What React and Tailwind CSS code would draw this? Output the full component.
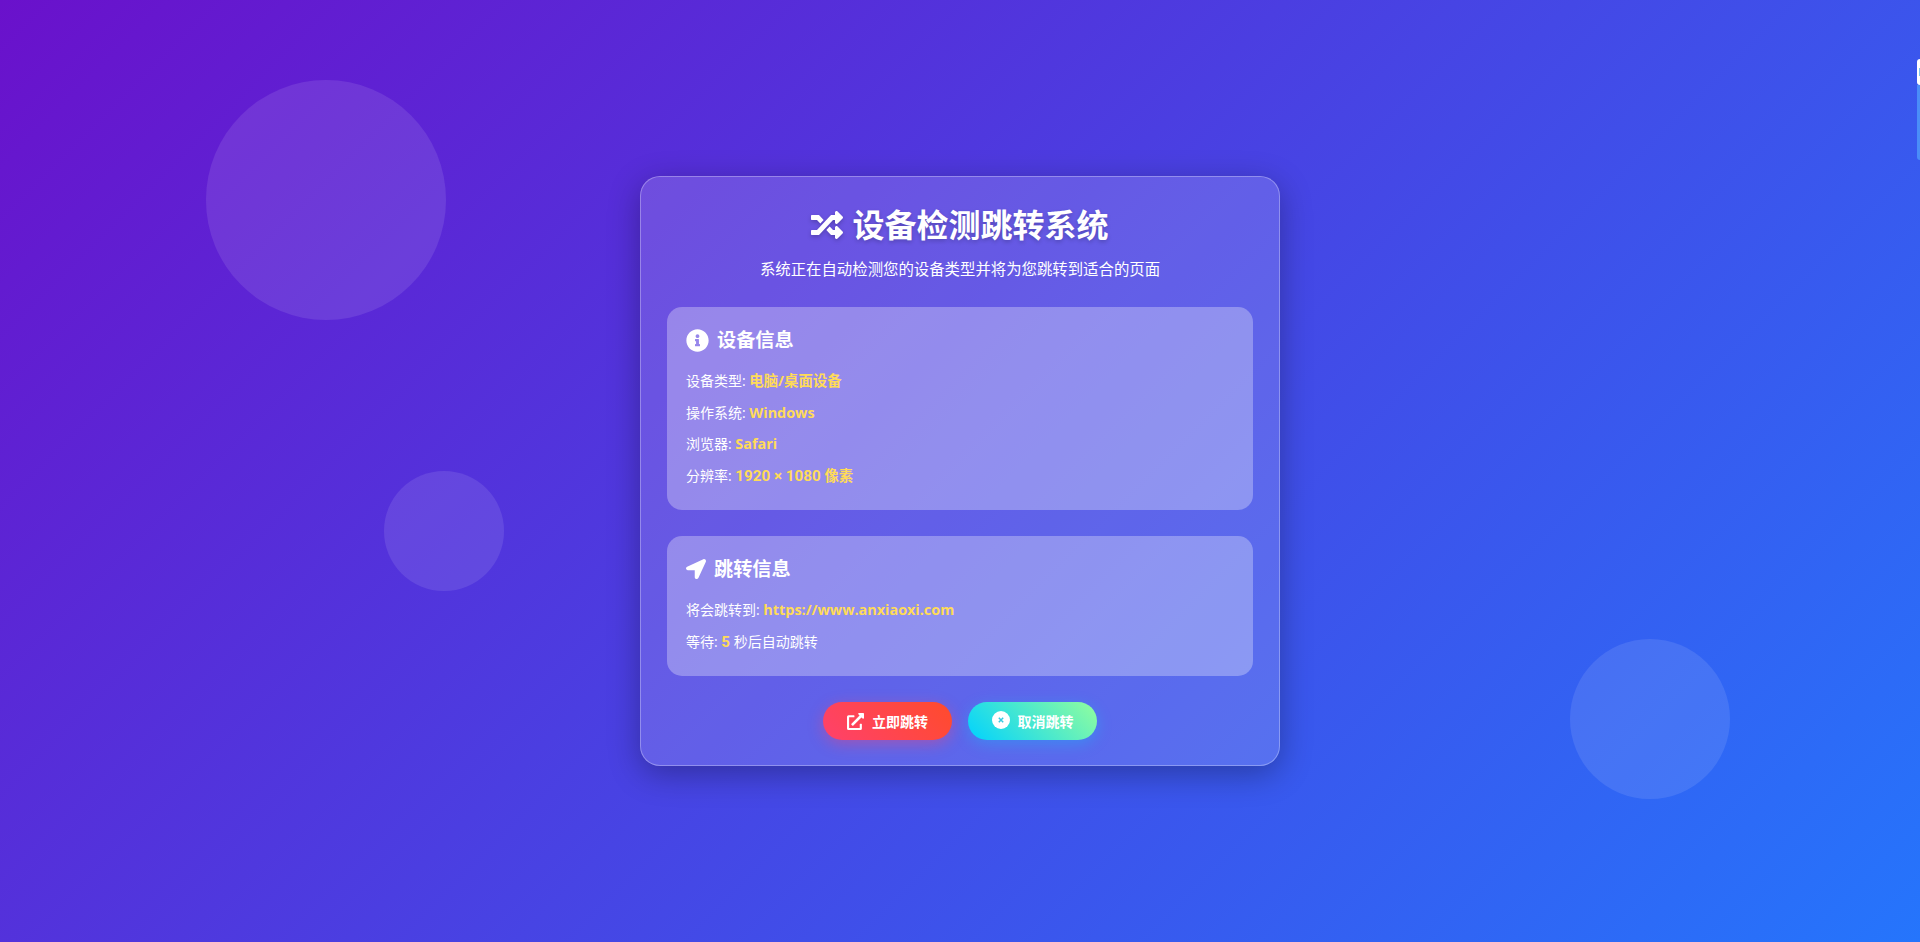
import React from "react";
import { FaRandom, FaInfoCircle, FaLocationArrow, FaExternalLinkAlt } from "react-icons/fa";

const Row = ({ label, value, tail, digits }) => (
  <p className="mt-[12px] h-[19.5px] text-[14px] leading-[19.5px] text-white">
    {label}:{" "}
    <span className="text-[14.4px] font-bold text-[#ffdb58]">
      {digits && <span className="font-['Roboto',sans-serif] text-[15.2px]">{digits}</span>}
      {value}
    </span>
    {tail}
  </p>
);

const Panel = ({ icon, title, children, className }) => (
  <section className={"rounded-[15px] bg-white/30 px-[19px] pt-[20px] " + className}>
    <h2 className="mb-[18px] flex h-[26px] items-center gap-[8px] text-[19.2px] font-bold text-white">
      {icon}
      {title}
    </h2>
    {children}
  </section>
);

const App = () => {
  return (
    <div className="relative flex h-[942px] items-center justify-center overflow-hidden bg-[linear-gradient(135deg,#6a11cb,#2575fc)] font-['Open_Sans','Noto_Sans_CJK_SC',sans-serif]">
      <div className="absolute left-[206px] top-[80px] h-[240px] w-[240px] rounded-full bg-white/10" />
      <div className="absolute left-[384px] top-[471px] h-[120px] w-[120px] rounded-full bg-white/10" />
      <div className="absolute left-[1570px] top-[639px] h-[160px] w-[160px] rounded-full bg-white/10" />

      <div className="absolute right-0 top-[59px] flex h-[26px] w-[3px] items-center justify-end rounded-l-[3px] bg-white">
        <div className="h-[8px] w-[1px] bg-[#7cc4f0]" />
      </div>
      <div className="absolute right-0 top-[85px] h-[75px] w-[3px] rounded-bl-[3px] bg-[#4a8df8]" />

      <main className="relative w-[640px] rounded-[20px] border border-white/30 bg-white/15 px-[26px] pb-[25px] pt-[24px] shadow-[0_8px_32px_rgba(0,0,0,0.3)]">
        <header className="mb-[26px] text-center">
          <h1 className="flex h-[48px] items-center justify-center gap-[9px] text-[32px] font-bold text-white [text-shadow:0_2px_4px_rgba(0,0,0,0.2)]">
            <FaRandom className="h-[32px] w-[32px] drop-shadow-[0_2px_2px_rgba(0,0,0,0.2)]" />
            设备检测跳转系统
          </h1>
          <p className="mt-[10px] text-[15.4px] leading-[22px] text-white">系统正在自动检测您的设备类型并将为您跳转到适合的页面</p>
        </header>

        <Panel className="h-[203px]" icon={<FaInfoCircle className="h-[23px] w-[23px]" />} title="设备信息">
          <Row label="设备类型" value="电脑/桌面设备" />
          <Row label="操作系统" value="Windows" />
          <Row label="浏览器" value="Safari" />
          <Row label="分辨率" digits="1920 × 1080" value=" 像素" />
        </Panel>

        <Panel className="mt-[26px] h-[140px]" icon={<FaLocationArrow className="h-[20px] w-[20px]" />} title="跳转信息">
          <Row label="将会跳转到" value="https://www.anxiaoxi.com" />
          <Row label="等待" digits="5" tail=" 秒后自动跳转" />
        </Panel>

        <div className="mt-[26px] flex justify-center gap-[16px]">
          <button className="flex h-[38px] w-[129px] items-center justify-center gap-[8px] rounded-full bg-[linear-gradient(45deg,#ff416c,#ff4b2b)] text-[14px] font-bold text-white shadow-[0_4px_15px_rgba(255,65,108,0.4)]">
            <FaExternalLinkAlt className="h-[17px] w-[17px]" />
            立即跳转
          </button>
          <button className="flex h-[38px] w-[129px] items-center justify-center gap-[8px] rounded-full bg-[linear-gradient(45deg,#00d2ff,#92fe9d)] text-[14px] font-bold text-white shadow-[0_4px_15px_rgba(0,210,255,0.3)]">
            <svg viewBox="0 0 18 18" className="-mt-[2px] h-[18px] w-[18px]">
              <circle cx="9" cy="9" r="9" fill="#fff" />
              <path d="M6.8 6.8l4.4 4.4M11.2 6.8l-4.4 4.4" stroke="#35c9e0" strokeWidth="1.5" />
            </svg>
            取消跳转
          </button>
        </div>
      </main>
    </div>
  );
};

export default App;
